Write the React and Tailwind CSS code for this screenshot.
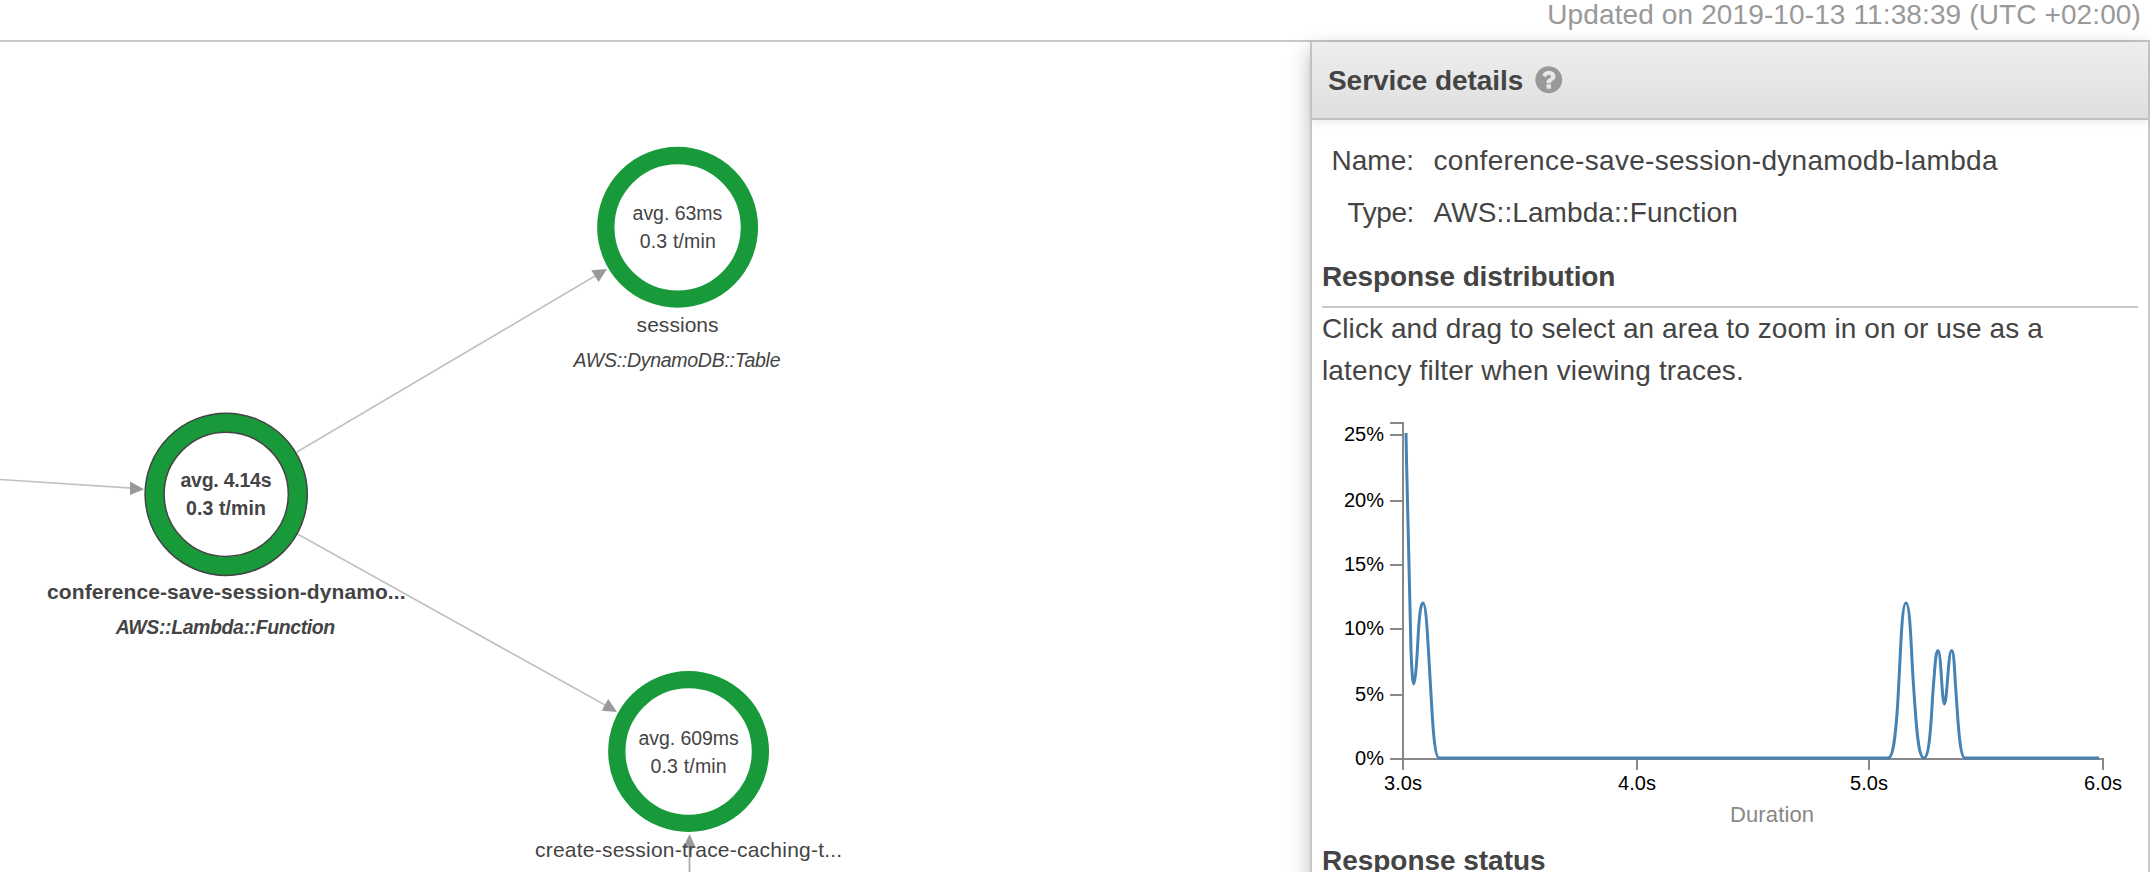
const GREEN = '#18993a';

function Caption({ x, y, size, width, bold, italic, children }) {
  return (
    <text
      x={x}
      y={y}
      fontSize={size}
      textLength={width}
      fontWeight={bold ? 700 : 400}
      fontStyle={italic ? 'italic' : 'normal'}
      textAnchor="middle"
      fill="#444"
    >
      {children}
    </text>
  );
}

function ServiceMap() {
  return (
    <svg className="block h-[830px] w-[1310px]" viewBox="0 42 1310 830">
      <g stroke="#c2c2c2" strokeWidth="1.7" fill="none">
        <path d="M0 479.5 L132 488.2" />
        <path d="M296.5 452.3 L540 308.6 L598 274.3" />
        <path d="M297.5 534 L520 657.8 L606 705.6" />
        <path d="M689.5 872 V846" stroke="#aaa" />
      </g>
      <g fill="#999">
        <path d="M130 481.5 L144 489.2 L130 495 Z" />
        <path d="M591.3 270.3 L607 269 L598.6 282 Z" />
        <path d="M601.7 710.8 L608.2 699 L617 712 Z" />
        <path d="M689.5 834 L696 848 L683 848 Z" />
      </g>

      <circle cx="226.2" cy="494.3" r="71.8" fill="none" stroke={GREEN} strokeWidth="19" />
      <circle cx="226.2" cy="494.3" r="81.1" fill="none" stroke="#444" strokeWidth="1.5" />
      <circle cx="226.2" cy="494.3" r="62.1" fill="none" stroke="#444" strokeWidth="1.5" />
      <Caption x={226} y={487} size={19.5} width={91.2} bold>avg. 4.14s</Caption>
      <Caption x={226} y={514.8} size={19.5} width={80} bold>0.3 t/min</Caption>
      <Caption x={226.3} y={598.5} size={21} width={358.4} bold>conference-save-session-dynamo...</Caption>
      <Caption x={225.5} y={634} size={19.5} width={219.5} bold italic>AWS::Lambda::Function</Caption>

      <circle cx="677.6" cy="227.3" r="71.8" fill="none" stroke={GREEN} strokeWidth="17.3" />
      <Caption x={677.4} y={219.7} size={19.5} width={89.6}>avg. 63ms</Caption>
      <Caption x={677.8} y={247.7} size={19.5} width={76.2}>0.3 t/min</Caption>
      <Caption x={677.6} y={331.6} size={21} width={82}>sessions</Caption>
      <Caption x={677} y={366.8} size={19.5} width={207} italic>AWS::DynamoDB::Table</Caption>

      <circle cx="688.6" cy="751.5" r="71.8" fill="none" stroke={GREEN} strokeWidth="17.3" />
      <Caption x={688.6} y={744.6} size={19.5} width={100.2}>avg. 609ms</Caption>
      <Caption x={688.6} y={772.6} size={19.5} width={76.2}>0.3 t/min</Caption>
      <Caption x={688.6} y={856.7} size={21} width={307.2}>create-session-trace-caching-t...</Caption>
    </svg>
  );
}

const yTicks = [
  ['25%', 435],
  ['20%', 501],
  ['15%', 565],
  ['10%', 629],
  ['5%', 695],
  ['0%', 759],
];
const xTicks = [
  ['3.0s', 1403],
  ['4.0s', 1637],
  ['5.0s', 1869],
  ['6.0s', 2103],
];

function ResponseChart() {
  return (
    <svg className="block h-[448px] w-[836px]" viewBox="1312 392 836 448">
      <g stroke="#888" strokeWidth="2" fill="none">
        <path d="M1390 423 H1403 V759 H2103 V770" />
        {yTicks.map(([t, y]) => (
          <path key={t} d={`M1390 ${y} H1403`} />
        ))}
        {xTicks.map(([t, x]) => (
          <path key={t} d={`M${x} 759 V770`} />
        ))}
      </g>
      <path
        d="M1406 433 C1407.5 510 1409 590 1411 650 C1412 675 1412.8 684 1413.7 684 C1415.500 684 1417.200 655 1418.300 633 C1419.600 612 1421 603 1423 603 C1426 603 1427.600 636 1429 660 C1429.800 676 1430.700 690 1431.500 703 C1432.500 720 1434.500 758 1439 758 H1888 C1893.500 758 1895.500 735 1897.500 707 C1898.500 690 1899.200 676 1900 660 C1901.500 628 1903 603 1906 603 C1909 603 1910.500 628 1912 660 C1912.800 676 1913.800 690 1915 707 C1917 735 1919 758 1924 758 C1928.500 758 1930.500 733 1932 707 C1932.800 692 1933.600 684 1934.500 672 C1935.500 658 1936.500 650.5 1938 650.5 C1941.200 650.5 1941.800 704 1944.400 704 C1947 704 1948.200 650.5 1951.600 650.5 C1953.300 650.5 1954 660 1954.700 672 C1955.500 688 1956.200 694 1957 707 C1959 738 1961 758 1965 758 H2099"
        fill="none"
        stroke="#4682b4"
        strokeWidth="3"
      />
      <g fontSize="20" fill="#000">
        {yTicks.map(([t, y]) => (
          <text key={t} x="1384" y={y + 6} textAnchor="end">
            {t}
          </text>
        ))}
        {xTicks.map(([t, x]) => (
          <text key={t} x={x} y="790" textAnchor="middle">
            {t}
          </text>
        ))}
      </g>
      <text x="1772" y="821.7" textAnchor="middle" fontSize="22" textLength="84" fill="#888">
        Duration
      </text>
    </svg>
  );
}

function HelpIcon() {
  return (
    <svg className="size-[31.5px]" viewBox="0 0 1792 1792" fill="#999">
      <path d="M1024 1376v-192q0-14-9-23t-23-9h-192q-14 0-23 9t-9 23v192q0 14 9 23t23 9h192q14 0 23-9t9-23zM1280 704q0-88-55.5-163t-138.5-116-170-41q-243 0-371 213-15 24 8 42l132 100q7 6 19 6 16 0 25-12 53-68 86-92 34-24 86-24 48 0 85.5 26t37.5 59q0 38-20 61t-68 45q-63 28-115.5 86.5t-52.5 125.5v36q0 14 9 23t23 9h192q14 0 23-9t9-23q0-19 21.500-49.500t54.500-49.500q32-18 49-28.500t46-35 44.500-48 28-60.500 12.500-81zM1664 896q0 209-103 385.500t-279.500 279.500-385.500 103-385.500-103-279.500-279.500-103-385.500 103-385.500 279.500-279.500 385.500-103 385.500 103 279.500 279.500 103 385.500z" />
    </svg>
  );
}

export default function App() {
  return (
    <div className="flex h-[872px] w-full flex-col overflow-hidden bg-white font-['Liberation_Sans',Arial,sans-serif] text-[28px] text-[#444]">
      <header className="flex h-[42px] shrink-0 justify-end border-b-2 border-[#c8c8c8] pr-[9px] leading-[29px] tracking-[0.118px] text-[#999]">
        Updated on 2019-10-13 11:38:39 (UTC +02:00)
      </header>
      <main className="flex min-h-0 flex-1">
        <section className="min-w-0 flex-1">
          <ServiceMap />
        </section>
        <aside className="h-[890px] w-[840px] shrink-0 border-x-2 border-[#c8c8c8] bg-white leading-[42px] shadow-[0_8px_20px_rgba(0,0,0,0.26)]">
          <div className="flex h-[78px] items-center gap-[9.5px] border-b-2 border-[#bfbfbf] bg-linear-to-b from-[#eeeeee] to-[#dfdfdf] pl-4 shadow-[0_3px_8px_rgba(0,0,0,0.08)]">
            <h2 className="pt-px font-bold tracking-[-0.061px]">Service details</h2>
            <HelpIcon />
          </div>
          <dl className="mt-5 grid grid-cols-[102px_1fr] gap-x-[19.5px] gap-y-2.5">
            <dt className="text-right">Name:</dt>
            <dd className="tracking-[0.304px]">conference-save-session-dynamodb-lambda</dd>
            <dt className="text-right tracking-[-0.4px]">Type:</dt>
            <dd className="tracking-[0.092px]">AWS::Lambda::Function</dd>
          </dl>
          <div className="mx-2.5 mt-[22px] border-b-2 border-[#c8c8c8] pb-2">
            <h3 className="font-bold tracking-[-0.108px]">Response distribution</h3>
          </div>
          <p className="ml-2.5 whitespace-nowrap tracking-[0.085px]">
            Click and drag to select an area to zoom in on or use as a
            <br />
            <span className="tracking-[0.138px]">latency filter when viewing traces.</span>
          </p>
          <ResponseChart />
          <h3 className="ml-2.5 font-bold tracking-[-0.035px]">Response status</h3>
        </aside>
      </main>
    </div>
  );
}
